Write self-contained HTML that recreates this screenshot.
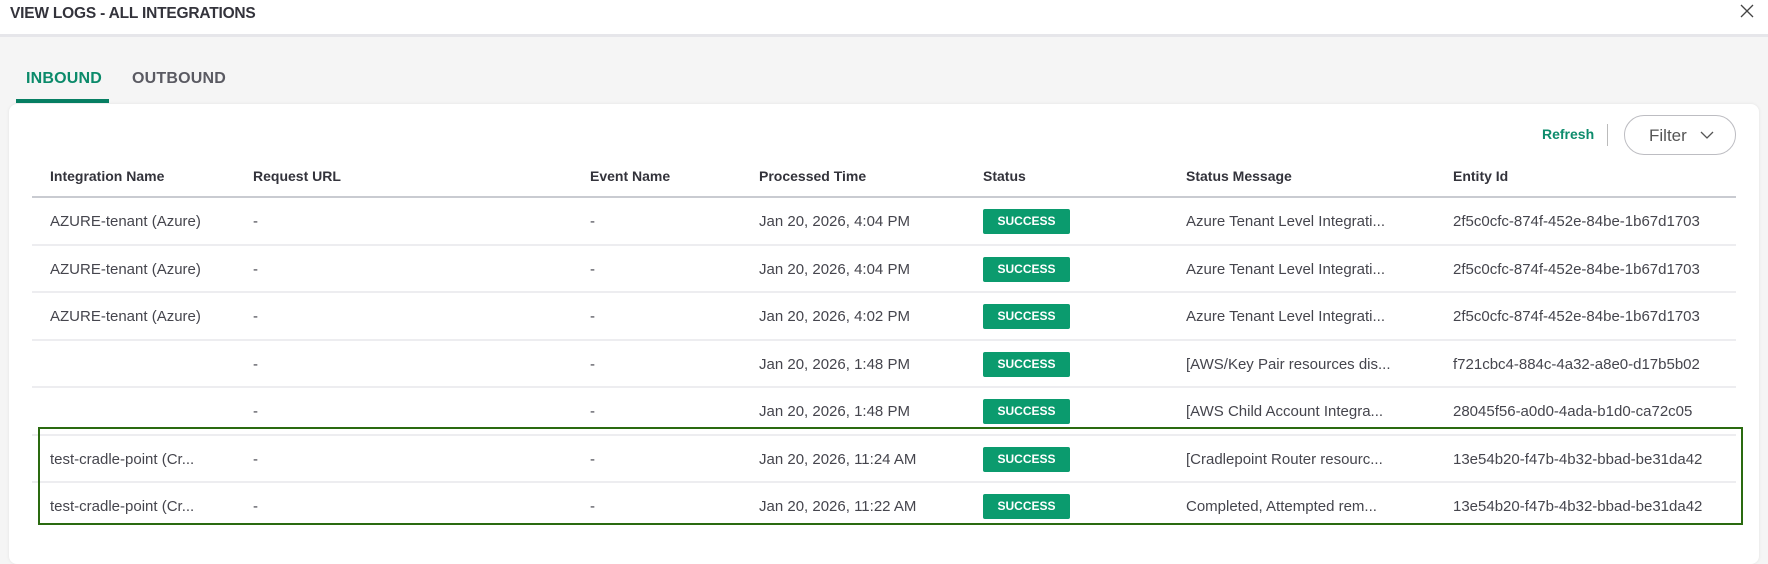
<!DOCTYPE html>
<html><head><meta charset="utf-8"><style>
*{box-sizing:border-box;margin:0;padding:0}
body{width:1768px;height:549px;overflow:hidden;background:#f5f5f5;font-family:"Liberation Sans",sans-serif;position:relative;color:#3d3d45}
.hdr{position:absolute;left:0;top:0;width:1768px;height:37px;background:#fff;border-bottom:3px solid #e6e6ea}
.title{position:absolute;left:10px;top:5px;font-size:15.5px;font-weight:bold;color:#33333b;letter-spacing:-0.2px}
.close{position:absolute;left:1740px;top:4px}
.tab{position:absolute;top:70px;font-size:16px;font-weight:bold;letter-spacing:0.2px}
.ul{position:absolute;left:16px;top:99px;width:93px;height:4px;background:#077f63}
.card{position:absolute;left:9px;top:104px;width:1750px;height:460px;background:#fff;border-radius:8px;box-shadow:0 0 3px rgba(0,0,0,0.08)}
.refresh{position:absolute;left:1542px;top:126px;font-size:14px;font-weight:bold;color:#0d8c6c}
.div{position:absolute;left:1607px;top:124px;width:1px;height:22px;background:#bbb}
.filter{position:absolute;left:1624px;top:115px;width:112px;height:40px;border:1.5px solid #bdbdc2;border-radius:20px;font-size:17px;color:#555;padding:10px 0 0 24px}
.filter svg{position:absolute;left:75px;top:15px}
.th{position:absolute;top:168px;font-size:14px;font-weight:bold;color:#33333b;white-space:nowrap}
.hl{position:absolute;left:32px;top:196px;width:1704px;height:2px;background:#c9cbd1}
.row{position:absolute;left:32px;width:1704px;height:47.5px;border-bottom:2px solid #ededf0;overflow:hidden}
.c{position:absolute;top:15px;font-size:15px;color:#45454d;white-space:nowrap}
.b{position:absolute;left:951px;top:11px;width:87px;height:25px;background:#0b9b6e;border-radius:2px;color:#fff;font-size:12px;font-weight:bold;text-align:center;line-height:25px}
.box{position:absolute;left:38px;top:427px;width:1705px;height:98px;border:2.5px solid #2a6a10}
</style></head><body>
<div class="hdr"><div class="title">VIEW LOGS - ALL INTEGRATIONS</div>
<svg class="close" width="14" height="14" viewBox="0 0 14 14"><path d="M1 1L13 13M13 1L1 13" stroke="#444" stroke-width="1.3"/></svg></div>
<div class="tab" style="left:26px;color:#0b8a6a">INBOUND</div>
<div class="tab" style="left:132px;color:#5a5a62">OUTBOUND</div>
<div class="ul"></div>
<div class="card"></div>
<div class="refresh">Refresh</div><div class="div"></div>
<div class="filter">Filter<svg width="14" height="8" viewBox="0 0 14 8"><path d="M1 1L7 7L13 1" fill="none" stroke="#555" stroke-width="1.3"/></svg></div>
<div class="th" style="left:50px">Integration Name</div>
<div class="th" style="left:253px">Request URL</div>
<div class="th" style="left:590px">Event Name</div>
<div class="th" style="left:759px">Processed Time</div>
<div class="th" style="left:983px">Status</div>
<div class="th" style="left:1186px">Status Message</div>
<div class="th" style="left:1453px">Entity Id</div>
<div class="hl"></div>

<div class="row" style="top:198px"><span class="c" style="left:18px">AZURE-tenant (Azure)</span><span class="c" style="left:221px">-</span><span class="c" style="left:558px">-</span><span class="c" style="left:727px">Jan 20, 2026, 4:04 PM</span><div class="b">SUCCESS</div><span class="c" style="left:1154px">Azure Tenant Level Integrati...</span><span class="c" style="left:1421px">2f5c0cfc-874f-452e-84be-1b67d1703</span></div>
<div class="row" style="top:245.5px"><span class="c" style="left:18px">AZURE-tenant (Azure)</span><span class="c" style="left:221px">-</span><span class="c" style="left:558px">-</span><span class="c" style="left:727px">Jan 20, 2026, 4:04 PM</span><div class="b">SUCCESS</div><span class="c" style="left:1154px">Azure Tenant Level Integrati...</span><span class="c" style="left:1421px">2f5c0cfc-874f-452e-84be-1b67d1703</span></div>
<div class="row" style="top:293px"><span class="c" style="left:18px">AZURE-tenant (Azure)</span><span class="c" style="left:221px">-</span><span class="c" style="left:558px">-</span><span class="c" style="left:727px">Jan 20, 2026, 4:02 PM</span><div class="b">SUCCESS</div><span class="c" style="left:1154px">Azure Tenant Level Integrati...</span><span class="c" style="left:1421px">2f5c0cfc-874f-452e-84be-1b67d1703</span></div>
<div class="row" style="top:340.5px"><span class="c" style="left:221px">-</span><span class="c" style="left:558px">-</span><span class="c" style="left:727px">Jan 20, 2026, 1:48 PM</span><div class="b">SUCCESS</div><span class="c" style="left:1154px">[AWS/Key Pair resources dis...</span><span class="c" style="left:1421px">f721cbc4-884c-4a32-a8e0-d17b5b02</span></div>
<div class="row" style="top:388px"><span class="c" style="left:221px">-</span><span class="c" style="left:558px">-</span><span class="c" style="left:727px">Jan 20, 2026, 1:48 PM</span><div class="b">SUCCESS</div><span class="c" style="left:1154px">[AWS Child Account Integra...</span><span class="c" style="left:1421px">28045f56-a0d0-4ada-b1d0-ca72c05</span></div>
<div class="row" style="top:435.5px"><span class="c" style="left:18px">test-cradle-point (Cr...</span><span class="c" style="left:221px">-</span><span class="c" style="left:558px">-</span><span class="c" style="left:727px">Jan 20, 2026, 11:24 AM</span><div class="b">SUCCESS</div><span class="c" style="left:1154px">[Cradlepoint Router resourc...</span><span class="c" style="left:1421px">13e54b20-f47b-4b32-bbad-be31da42</span></div>
<div class="row" style="top:483px;border-bottom:none"><span class="c" style="left:18px">test-cradle-point (Cr...</span><span class="c" style="left:221px">-</span><span class="c" style="left:558px">-</span><span class="c" style="left:727px">Jan 20, 2026, 11:22 AM</span><div class="b">SUCCESS</div><span class="c" style="left:1154px">Completed, Attempted rem...</span><span class="c" style="left:1421px">13e54b20-f47b-4b32-bbad-be31da42</span></div>
<div class="box"></div>
</body></html>
